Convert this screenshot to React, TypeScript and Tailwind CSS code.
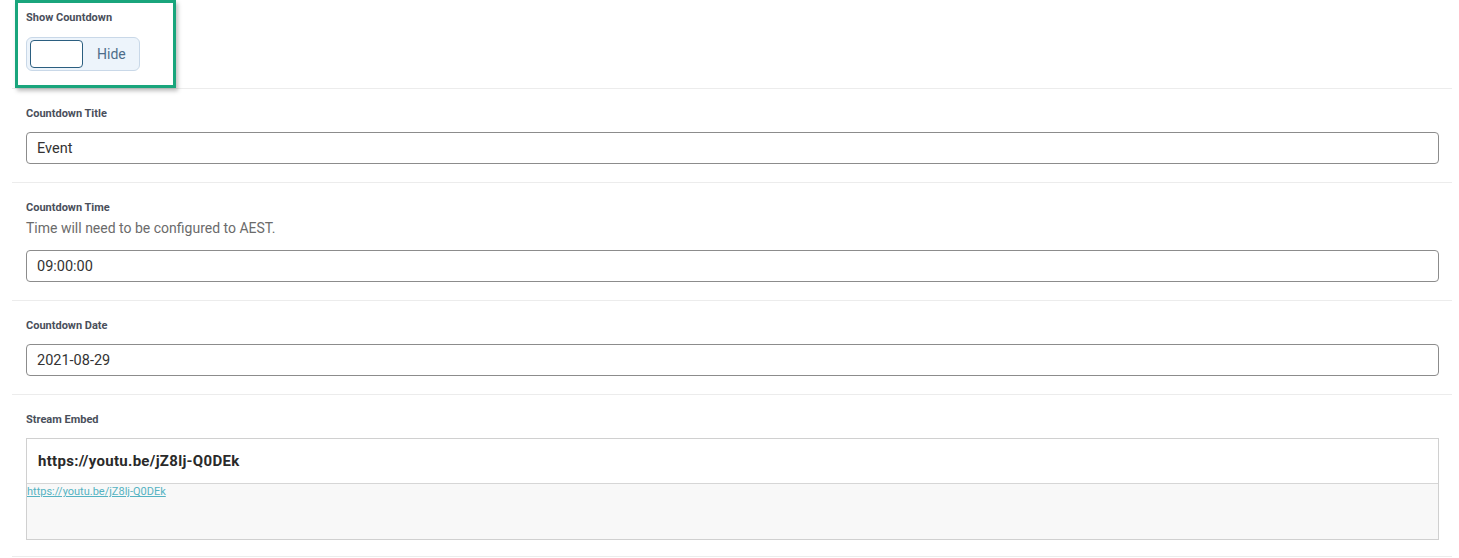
import { useState } from "react";

type Field = {
  label: string;
  hint?: string;
  value: string;
};

const fields: Field[] = [
  { label: "Countdown Title", value: "Event" },
  {
    label: "Countdown Time",
    hint: "Time will need to be configured to AEST.",
    value: "09:00:00",
  },
  { label: "Countdown Date", value: "2021-08-29" },
];

function Label({ children }: { children: React.ReactNode }) {
  return (
    <p className="text-[11px] font-bold leading-[14px] text-[#4a4f5b]">
      {children}
    </p>
  );
}

export default function App() {
  const [show, setShow] = useState(false);
  const [rows, setRows] = useState(fields);
  const url = "https://youtu.be/jZ8lj-Q0DEk";

  function patch(i: number, value: string) {
    setRows((prev) => prev.map((r, j) => (j === i ? { ...r, value } : r)));
  }

  return (
    <div className="min-h-[558px] bg-white pl-[12px] pr-[7px] font-['Roboto','Liberation_Sans',sans-serif]">
      {/* show countdown */}
      <div className="relative border-b border-[#ececec] pl-[14px] pt-[11px] pb-[17px]">
        <div className="pointer-events-none absolute left-[3px] top-0 h-[88px] w-[161px] border-[3px] border-[#19a57c] shadow-[2px_3px_4px_rgba(0,0,0,0.25)]" />
        <Label>Show Countdown</Label>
        <button
          className="mt-[12px] flex h-[34px] w-[114px] items-center rounded-[6px] border border-[#c9d8e8] bg-[#edf4fb] pl-[3px]"
          onClick={() => setShow(!show)}
        >
          <span className="h-[28px] w-[53px] rounded-[4px] border-[1.5px] border-[#2b5e80] bg-white" />
          <span className="ml-[14px] text-[14px] text-[#4d6d8a]">
            {show ? "Show" : "Hide"}
          </span>
        </button>
      </div>

      {rows.map((f, i) => (
        <div
          key={f.label}
          className="border-b border-[#ececec] pl-[14px] pr-[13px] pt-[18px] pb-[18px]"
        >
          <Label>{f.label}</Label>
          {f.hint && (
            <p className="mt-[3px] text-[14px] leading-[20px] text-[#6b6b6b]">
              {f.hint}
            </p>
          )}
          <input
            className={`${f.hint ? "mt-[12px]" : "mt-[11px]"} block h-[32px] w-full rounded-[4px] border border-[#8c8c8c] px-[10px] text-[14.5px] text-[#333] outline-none`}
            value={f.value}
            onChange={(e) => patch(i, e.target.value)}
          />
        </div>
      ))}

      {/* stream embed */}
      <div className="border-b border-[#ececec] pl-[14px] pr-[13px] pt-[18px] pb-[16px]">
        <Label>Stream Embed</Label>
        <div className="mt-[11px] border border-[#d0d0d0]">
          <div className="flex h-[44px] items-center px-[11px] text-[15px] font-bold tracking-[0.3px] text-[#2a2a2a]">
            {url}
          </div>
          <div className="h-[56px] border-t border-[#d6d6d6] bg-[#f8f8f8] pt-[1px] text-[11px] leading-[14px]">
            <a href="#" className="text-[#55b3c2] underline">
              {url}
            </a>
          </div>
        </div>
      </div>
    </div>
  );
}
